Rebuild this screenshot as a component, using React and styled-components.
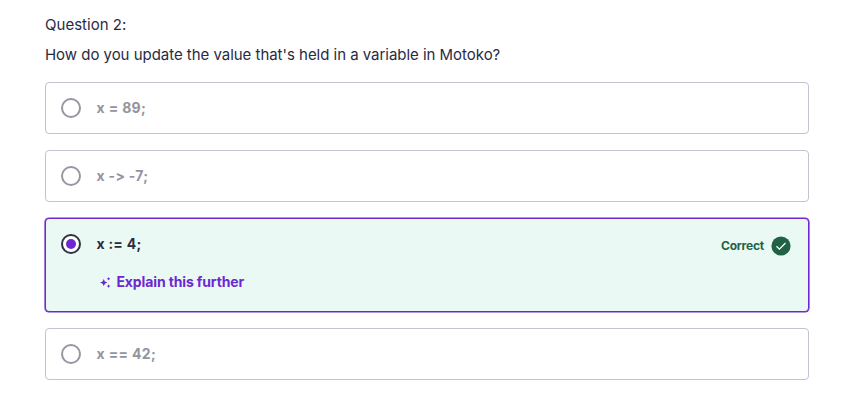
import React from "react";
import styled, { createGlobalStyle } from "styled-components";

const GlobalStyle = createGlobalStyle`
  *, *::before, *::after { box-sizing: border-box; }
  body { margin: 0; background: #fff; font-family: Inter, "Liberation Sans", sans-serif; color: #2a2b3f; }
`;

const Quiz = styled.main`
  padding: 13px 48px 22px 45px;
`;

const Prompt = styled.p`
  margin: 0 0 6px;
  font-size: 15px;
  line-height: 24px;
  white-space: nowrap;
  letter-spacing: ${(p) => p.$tracking || "0"};
`;

const Options = styled.div`
  display: flex;
  flex-direction: column;
  gap: 16px;
  margin-top: 15px;
`;

const Option = styled.div`
  display: flex;
  align-items: flex-start;
  height: ${(p) => (p.$selected ? "94px" : "52px")};
  padding: 15px;
  border: 1px solid ${(p) => (p.$selected ? "#6d28d2" : "#c4c2d0")};
  border-radius: 4px;
  background: ${(p) => (p.$selected ? "#eaf9f4" : "#fff")};
  box-shadow: ${(p) => (p.$selected ? "0 0 0 0.6px #6d28d2" : "none")};
`;

const Radio = styled.span`
  flex: none;
  display: grid;
  place-items: center;
  width: 20px;
  height: 20px;
  border: 2px solid ${(p) => (p.$selected ? "#303141" : "#9797a4")};
  border-radius: 50%;
  background: #fff;
`;

const RadioDot = styled.span`
  width: 10px;
  height: 10px;
  border-radius: 50%;
  background: #6d28d2;
`;

const Body = styled.div`
  flex: 1;
  margin-left: 15.5px;
`;

const Answer = styled.div`
  font-size: 14px;
  font-weight: 700;
  line-height: 20px;
  font-variant-ligatures: none;
  font-feature-settings: "calt" 0;
  letter-spacing: ${(p) => p.$tracking || "0"};
  color: ${(p) => (p.$selected ? "#2a2b3f" : "#94949f")};
`;

const Explain = styled.button`
  display: flex;
  align-items: center;
  gap: 6px;
  margin: 18px 0 0 3px;
  padding: 0;
  border: 0;
  background: none;
  color: #6d28d2;
  font: 700 14px/20px Inter, "Liberation Sans", sans-serif;
  letter-spacing: -0.13px;
  white-space: nowrap;
`;

const Status = styled.div`
  display: flex;
  align-items: center;
  gap: 7px;
  margin: 2px 2px 0 0;
  color: #206344;
  font-size: 12px;
  font-weight: 700;
  letter-spacing: -0.2px;
  line-height: 20px;
`;

function SparkleIcon() {
  return (
    <svg width="11" height="11" viewBox="0 0 11 11" fill="currentColor" aria-hidden="true">
      <path d="M3.7 2.1 4.9 4.5 7.4 5.6 4.9 6.7 3.7 9.1 2.6 6.7 0.1 5.6 2.6 4.5Z" />
      <path d="M8.6 0 9.2 1.2 10.4 1.8 9.2 2.4 8.6 3.6 8 2.4 6.8 1.8 8 1.2Z" />
      <path d="M8.6 7.3 9.2 8.5 10.4 9.1 9.2 9.7 8.6 10.9 8 9.7 6.8 9.1 8 8.5Z" />
    </svg>
  );
}

function CheckIcon() {
  return (
    <svg width="20" height="20" viewBox="0 0 20 20" aria-hidden="true">
      <circle cx="10" cy="10" r="9.6" fill="#206344" />
      <path d="m5.5 10.2 2.9 2.9 6.1-6.1" fill="none" stroke="#fff" strokeWidth="1.3" />
    </svg>
  );
}

const options = [
  { text: "x = 89;", tracking: "0.35px" },
  { text: "x -> -7;", tracking: "0.3px" },
  { text: "x := 4;", selected: true, tracking: "0.25px" },
  { text: "x == 42;", tracking: "0.35px" },
];

export default function App() {
  return (
    <>
      <GlobalStyle />
      <Quiz>
        <Prompt $tracking="0.02px">Question 2:</Prompt>
        <Prompt $tracking="-0.03px">How do you update the value that's held in a variable in Motoko?</Prompt>
        <Options>
          {options.map(({ text, selected, tracking }) => (
            <Option key={text} $selected={selected}>
              <Radio $selected={selected}>{selected && <RadioDot />}</Radio>
              <Body>
                <Answer $selected={selected} $tracking={tracking}>{text}</Answer>
                {selected && (
                  <Explain type="button">
                    <SparkleIcon />
                    Explain this further
                  </Explain>
                )}
              </Body>
              {selected && (
                <Status>
                  Correct
                  <CheckIcon />
                </Status>
              )}
            </Option>
          ))}
        </Options>
      </Quiz>
    </>
  );
}
